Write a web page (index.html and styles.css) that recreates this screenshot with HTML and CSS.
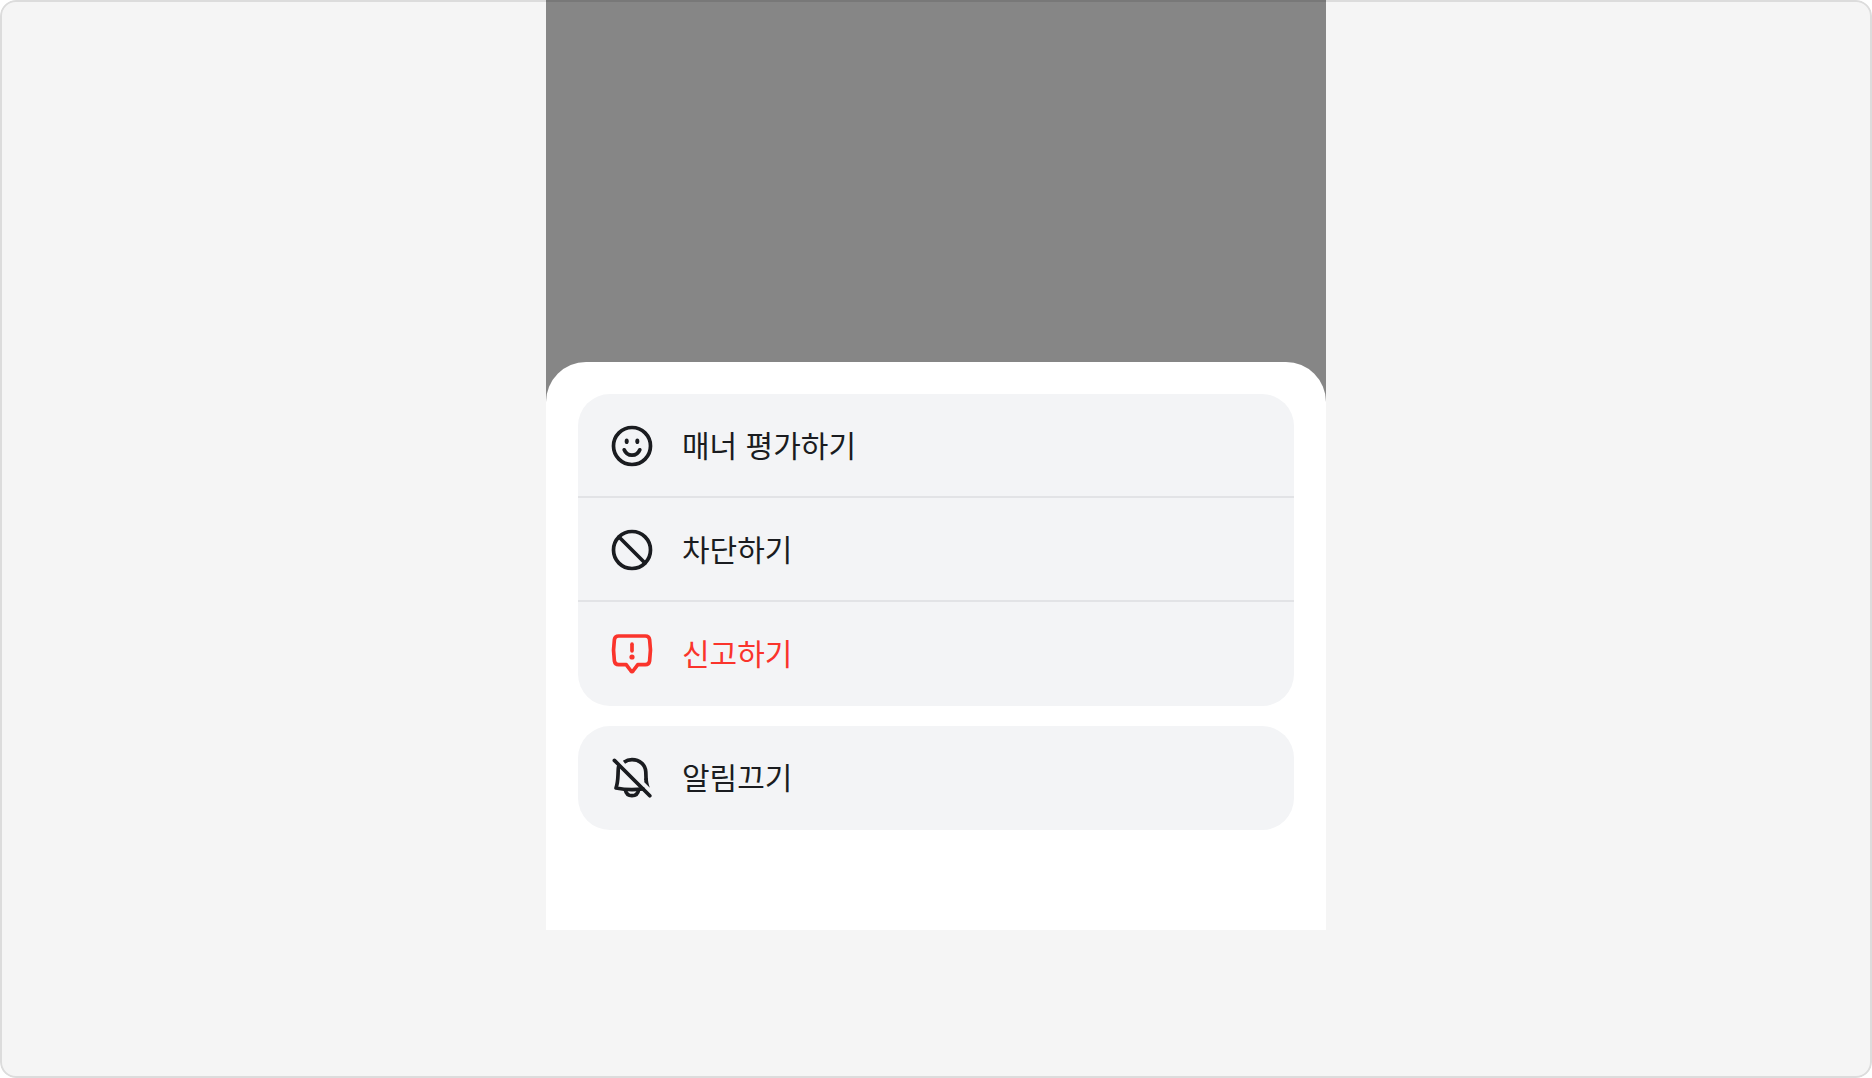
FILE: index.html
```html
<!DOCTYPE html>
<html lang="ko">
<head>
<meta charset="UTF-8">
<meta name="viewport" content="width=device-width, initial-scale=1.0">
<title>Action Sheet</title>
<link rel="stylesheet" href="styles.css">
</head>
<body>
  <main class="preview">
    <div class="screen">
      <div class="sheet">
        <div class="group">
          <button type="button" class="action">
            <svg class="icon" viewBox="0 0 44 44" aria-hidden="true">
              <circle cx="22" cy="22" r="18.5"/>
              <path d="M14.2 25.8C15.6 29.3 18.4 31.2 22 31.2S28.4 29.3 29.8 25.8"/>
              <ellipse class="solid" cx="16.7" cy="17.2" rx="2" ry="2.8"/>
              <ellipse class="solid" cx="27.3" cy="17.2" rx="2" ry="2.8"/>
            </svg>
            <span class="label">매너 평가하기</span>
          </button>
          <button type="button" class="action">
            <svg class="icon" viewBox="0 0 44 44" aria-hidden="true">
              <circle cx="22" cy="22" r="18.5"/>
              <path d="M9 9L35 35"/>
            </svg>
            <span class="label">차단하기</span>
          </button>
          <button type="button" class="action danger">
            <svg class="icon" viewBox="0 0 44 44" aria-hidden="true">
              <path d="M8.6 4H35.4C37.8 4 39.2 5.2 39.6 7.5C40.8 14.7 40.8 21.8 39.6 29C39.2 31.4 37.8 32.7 35.4 32.7H27.8L23 39Q22 40.2 21 39L16.2 32.7H8.6C6.2 32.7 4.8 31.4 4.4 29C3.2 21.8 3.2 14.7 4.4 7.5C4.8 5.2 6.2 4 8.6 4Z"/>
              <path d="M22 12.2V18.8"/>
              <circle class="solid" cx="22" cy="25" r="2.6"/>
            </svg>
            <span class="label">신고하기</span>
          </button>
        </div>
        <div class="group">
          <button type="button" class="action">
            <svg class="icon" viewBox="0 0 44 44" aria-hidden="true">
              <path class="flat" d="M14 6.3C16.3 4.6 19 3.7 22 3.7C29.8 3.7 35.4 8.8 35.8 15.8L36.1 24"/>
              <path class="solid" d="M34.2 22.5L37.9 22.3C38 25.2 38.4 27.8 39.8 31.8L34.3 26.3Z"/>
              <path d="M8.6 10.5C8.1 12 8.2 15 8 19C7.8 24.5 7.4 28 6 32Q14 33.6 22 33.6Q27.5 33.6 33 32.8"/>
              <path class="flat" d="M15.4 34C16 37.6 18.6 39.7 22 39.7S28 37.6 28.6 34"/>
              <path d="M4.4 4.4L39.8 39.8"/>
            </svg>
            <span class="label">알림끄기</span>
          </button>
        </div>
      </div>
    </div>
  </main>
</body>
</html>
```
FILE: styles.css
```css
* {
  box-sizing: border-box;
}
body {
  margin: 0;
  background-color: #ffffff;
  font-family: "Noto Sans CJK KR", sans-serif;
}
.preview {
  position: relative;
  display: flex;
  justify-content: center;
  align-items: flex-start;
  min-height: 100vh;
  background-color: #f5f5f5;
  border-radius: 16px;
  overflow: hidden;
}
/* frame line runs over the screen too */
.preview::after {
  content: "";
  position: absolute;
  inset: 0;
  border: 2px solid rgba(0, 0, 0, 0.1);
  border-radius: 16px;
  pointer-events: none;
}
.screen {
  width: 100%;
  max-width: 780px;
  padding-top: 362px;
  background-color: #868686;
}
.sheet {
  display: flex;
  flex-direction: column;
  gap: 20px;
  padding: 32px 32px 100px;
  background-color: #ffffff;
  border-radius: 40px 40px 0 0;
}
.group {
  border-radius: 32px;
  background-color: #f3f4f6;
  overflow: hidden;
}
.action {
  display: flex;
  align-items: center;
  gap: 28px;
  width: 100%;
  height: 104px;
  padding: 0 32px;
  border: none;
  background: none;
  color: #1a1c20;
  font-family: inherit;
  font-size: 30px;
  line-height: 40px;
  text-align: left;
  cursor: pointer;
}
.action:not(:last-child) {
  box-shadow: inset 0 -2px #e2e3e6;
}
.label {
  padding-bottom: 4px;
}
.danger {
  color: #fa342c;
}
.icon {
  flex: none;
  width: 44px;
  height: 44px;
  fill: none;
  stroke: currentColor;
  stroke-width: 3.7;
  stroke-linecap: round;
  stroke-linejoin: round;
}
.icon .flat {
  stroke-linecap: butt;
}
.icon .solid {
  fill: currentColor;
  stroke: none;
}
```
